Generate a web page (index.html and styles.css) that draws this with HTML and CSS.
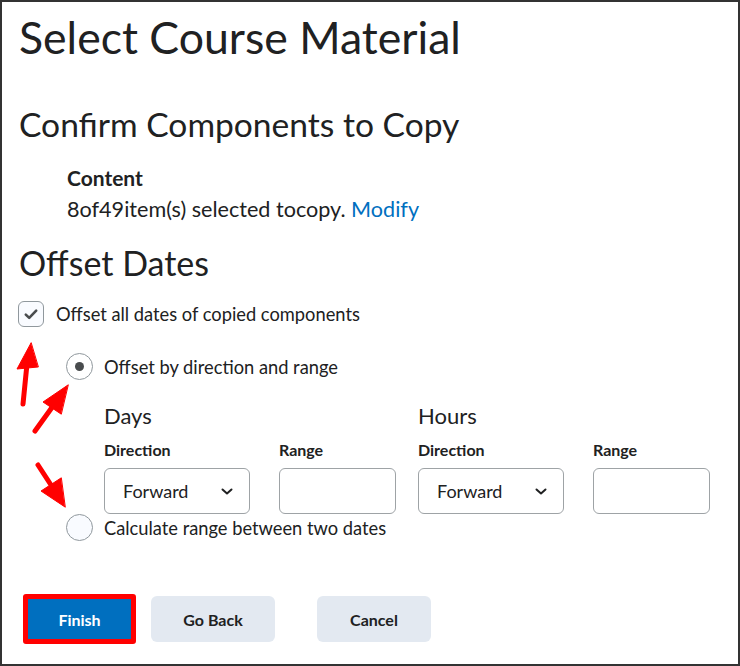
FILE: index.html
```html
<!DOCTYPE html>
<html>
<head>
<meta charset="utf-8">
<link rel="stylesheet" href="styles.css">
</head>
<body>
<div class="page">
  <h1 class="title">Select Course Material</h1>
  <h2 class="section">Confirm Components to Copy</h2>
  <div class="summary">
    <div class="summary-head">Content</div>
    <div class="summary-text">8of49item(s) selected tocopy. <a class="link" href="#">Modify</a></div>
  </div>
  <h2 class="section offset-title">Offset Dates</h2>
  <label class="check-row">
    <span class="checkbox">
      <svg width="16" height="16" viewBox="0 0 16 16"><path d="M2.8 8.6l3.4 3.3L13.2 4.6" fill="none" stroke="#494c4e" stroke-width="2.6" stroke-linecap="round" stroke-linejoin="round"/></svg>
    </span>
    <span class="check-label">Offset all dates of copied components</span>
  </label>
  <div class="options">
    <label class="radio-row">
      <span class="radio checked"><span class="dot"></span></span>
      <span class="radio-label">Offset by direction and range</span>
    </label>
    <div class="ranges">
      <div class="group">
        <div class="group-title">Days</div>
        <div class="fields">
          <div class="field">
            <div class="field-label">Direction</div>
            <div class="select">Forward
              <svg class="chev" width="14" height="9" viewBox="0 0 14 9"><path d="M2.5 2.5l4.5 4 4.5-4" fill="none" stroke="#202122" stroke-width="2" stroke-linecap="round" stroke-linejoin="round"/></svg>
            </div>
          </div>
          <div class="field">
            <div class="field-label">Range</div>
            <div class="input"></div>
          </div>
        </div>
      </div>
      <div class="group">
        <div class="group-title">Hours</div>
        <div class="fields">
          <div class="field">
            <div class="field-label">Direction</div>
            <div class="select">Forward
              <svg class="chev" width="14" height="9" viewBox="0 0 14 9"><path d="M2.5 2.5l4.5 4 4.5-4" fill="none" stroke="#202122" stroke-width="2" stroke-linecap="round" stroke-linejoin="round"/></svg>
            </div>
          </div>
          <div class="field">
            <div class="field-label">Range</div>
            <div class="input"></div>
          </div>
        </div>
      </div>
    </div>
    <label class="radio-row second">
      <span class="radio"></span>
      <span class="radio-label">Calculate range between two dates</span>
    </label>
  </div>
  <div class="buttons">
    <button class="btn primary">Finish</button>
    <button class="btn">Go Back</button>
    <button class="btn cancel">Cancel</button>
  </div>
  <svg class="arrows" width="740" height="666" viewBox="0 0 740 666">
    <g fill="#ff0000" stroke="#ff0000" stroke-linecap="round">
      <line x1="23" y1="404" x2="27" y2="364" stroke-width="5"/>
      <polygon points="31,343 17,369 38,367" stroke-width="1"/>
      <line x1="35" y1="431" x2="53" y2="406" stroke-width="5"/>
      <polygon points="68,385 43,402 61,414" stroke-width="1"/>
      <line x1="38" y1="465" x2="51" y2="485" stroke-width="5"/>
      <polygon points="65,507 41,491 61,478" stroke-width="1"/>
    </g>
  </svg>
</div>
</body>
</html>
```
FILE: styles.css
```css
* { box-sizing: border-box; }
html, body { margin: 0; padding: 0; background: #fff; }
body { font-family: Lato, "Open Sans", sans-serif; color: #202122; }

.page {
  position: relative;
  width: 740px;
  height: 666px;
  border: 2px solid #333;
  padding: 0 0 0 17px;
  overflow: hidden;
}

.title {
  margin: 9px 0 0 0;
  font-size: 44.6px;
  line-height: 52px;
  font-weight: 400;
}

.section {
  margin: 41px 0 0 0;
  font-size: 33.6px;
  line-height: 40px;
  font-weight: 400;
}

.summary { margin: 22px 0 0 48px; }
.summary-head { font-size: 21px; line-height: 24px; font-weight: 700; }
.summary-text { font-size: 21.6px; line-height: 28px; margin-top: 5px; }
.link { color: #006fbf; text-decoration: none; }

.offset-title { margin-top: 20px; font-size: 34px; }

.check-row { display: flex; align-items: center; gap: 12px; margin-top: 18px; margin-left: -1px; }
.checkbox {
  width: 26px; height: 26px;
  border: 1px solid #90989d;
  border-radius: 6px;
  background: #f9fbff;
  display: flex; align-items: center; justify-content: center;
}
.check-label { font-size: 18.3px; }

.options { margin-left: 47px; }
.radio-row { display: flex; align-items: center; gap: 11px; }
.radio-row:first-child { margin-top: 26px; }
.radio {
  width: 27px; height: 27px;
  border-radius: 50%;
  border: 1.5px solid #90989d;
  background: #f9fbff;
  display: flex; align-items: center; justify-content: center;
}
.radio.checked { background: #fff; }
.dot { width: 9px; height: 9px; border-radius: 50%; background: #494c4e; }
.radio-label { font-size: 18.3px; }

.ranges { display: flex; gap: 22px; margin-left: 38px; margin-top: 24px; }
.group-title { font-size: 22px; line-height: 24px; }
.fields { display: flex; gap: 29px; margin-top: 12px; }
.field-label { font-size: 16px; font-weight: 700; line-height: 20px; }
.select {
  margin-top: 8px;
  width: 146px; height: 46px;
  border: 1px solid #9ea3a6;
  border-radius: 6px;
  display: flex; align-items: center; justify-content: space-between;
  padding: 0 15px 0 18px;
  font-size: 18px;
}
.input {
  margin-top: 8px;
  width: 117px; height: 46px;
  border: 1px solid #9ea3a6;
  border-radius: 6px;
}

.radio-row.second { margin-top: 0; }

.buttons { display: flex; align-items: center; margin-top: 53px; margin-left: 4px; }
.btn {
  font-family: Lato, "Open Sans", sans-serif;
  font-size: 16px;
  font-weight: 700;
  color: #202122;
  background: #e3e9f1;
  border: none;
  border-radius: 6px;
  height: 46px;
  width: 124px;
  margin-left: 15px;
}
.btn.primary {
  margin-left: 0;
  width: 113px; height: 50px;
  background: #006fbf;
  color: #fff;
  border: 5px solid #ff0000;
  border-radius: 3px;
}
.btn.cancel { width: 114px; margin-left: 42px; }

.arrows { position: absolute; left: -2px; top: -2px; pointer-events: none; }
```
